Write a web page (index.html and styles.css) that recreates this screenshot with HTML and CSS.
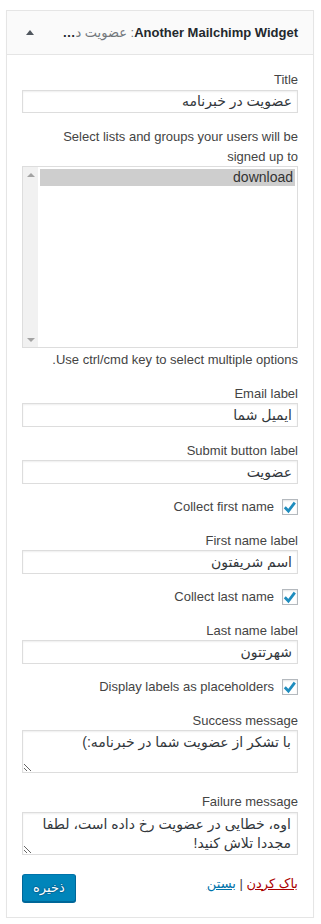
FILE: index.html
```html
<!DOCTYPE html>
<html dir="rtl" lang="fa">
<head>
<meta charset="UTF-8">
<meta name="viewport" content="width=device-width, initial-scale=1.0">
<title>Another Mailchimp Widget</title>
<link rel="stylesheet" href="styles.css">
</head>
<body>
  <div class="widget">
    <div class="widget-top">
      <h3 class="widget-title">Another Mailchimp Widget<span class="in-widget-title">: عضویت در خبرنامه</span></h3>
      <button class="widget-toggle" aria-label="Toggle"><span class="toggle-arrow"></span></button>
    </div>

    <div class="widget-inside">
      <p class="field">
        <label>Title</label>
        <input class="text" type="text" value="عضویت در خبرنامه">
      </p>

      <p class="field">
        <label>Select lists and groups your users will be signed up to</label>
        <span class="listbox">
          <span class="list-options">
            <span class="option selected">download</span>
          </span>
          <span class="list-scroll">
            <span class="scroll-up"></span>
            <span class="scroll-down"></span>
          </span>
        </span>
        <span class="hint">Use ctrl/cmd key to select multiple options.</span>
      </p>

      <p class="field">
        <label>Email label</label>
        <input class="text" type="text" value="ایمیل شما">
      </p>

      <p class="field">
        <label>Submit button label</label>
        <input class="text" type="text" value="عضویت">
      </p>

      <p class="field check-row">
        <span class="checkbox"><svg width="16" height="16" viewBox="0 0 16 16"><polyline points="2.8,8.2 6.4,12 12.8,3.6" fill="none" stroke="#1e8cbe" stroke-width="2.8"/></svg></span>
        <span>Collect first name</span>
      </p>

      <p class="field">
        <label>First name label</label>
        <input class="text" type="text" value="اسم شریفتون">
      </p>

      <p class="field check-row">
        <span class="checkbox"><svg width="16" height="16" viewBox="0 0 16 16"><polyline points="2.8,8.2 6.4,12 12.8,3.6" fill="none" stroke="#1e8cbe" stroke-width="2.8"/></svg></span>
        <span>Collect last name</span>
      </p>

      <p class="field">
        <label>Last name label</label>
        <input class="text" type="text" value="شهرتتون">
      </p>

      <p class="field check-row">
        <span class="checkbox"><svg width="16" height="16" viewBox="0 0 16 16"><polyline points="2.8,8.2 6.4,12 12.8,3.6" fill="none" stroke="#1e8cbe" stroke-width="2.8"/></svg></span>
        <span>Display labels as placeholders</span>
      </p>

      <p class="field field-area">
        <label>Success message</label>
        <textarea class="area">با تشکر از عضویت شما در خبرنامه:)</textarea>
      </p>

      <p class="field field-area">
        <label>Failure message</label>
        <textarea class="area">اوه، خطایی در عضویت رخ داده است، لطفا مجددا تلاش کنید!</textarea>
      </p>

      <div class="widget-actions">
        <div class="action-links">
          <a href="#" class="link-delete">باک کردن</a> | <a href="#" class="link-close">بستن</a>
        </div>
        <button class="button-save">ذخیره</button>
      </div>
    </div>
  </div>
</body>
</html>
```

FILE: styles.css
```css
body {
  margin: 0;
  background: #fff;
  color: #444;
  font-family: 'Liberation Sans', 'DejaVu Sans', sans-serif;
  font-size: 13px;
  line-height: 19.5px;
}

.widget {
  margin: 10px 7px 0 6px;
  border: 1px solid #e5e5e5;
  box-shadow: 0 1px 1px rgba(0, 0, 0, 0.04);
  background: #fff;
}

.widget-top {
  display: flex;
  align-items: center;
  height: 43px;
  background: #fafafa;
  border-bottom: 1px solid #e5e5e5;
}

.widget-title {
  flex: 1;
  min-width: 0;
  margin: 0;
  padding: 0 15px 0 9px;
  font-size: 13px;
  font-weight: 700;
  line-height: 43px;
  color: #23282d;
  white-space: nowrap;
  overflow: hidden;
  text-overflow: ellipsis;
}

.in-widget-title {
  font-weight: 400;
  color: #72777c;
}

.widget-toggle {
  width: 46px;
  height: 43px;
  padding: 0;
  border: none;
  background: transparent;
  display: flex;
  align-items: center;
  justify-content: center;
}

.toggle-arrow {
  width: 0;
  height: 0;
  border-left: 4px solid transparent;
  border-right: 4px solid transparent;
  border-bottom: 5px solid #50575e;
}

.widget-inside {
  padding: 15px 15px 15px;
}

.field {
  margin: 0 0 14px;
}

.field label {
  display: block;
}

.text {
  display: block;
  width: 100%;
  height: 23.5px;
  box-sizing: border-box;
  margin: 0;
  padding: 0 5px;
  border: 1px solid #ddd;
  box-shadow: inset 0 1px 2px rgba(0, 0, 0, 0.07);
  background: #fff;
  color: #32373c;
  font-family: 'Liberation Sans', 'DejaVu Sans', sans-serif;
  font-size: 14px;
  outline: none;
}

.listbox {
  display: flex;
  height: 182px;
  box-sizing: border-box;
  border: 1px solid #ddd;
  background: #fff;
}

.list-options {
  flex: 1;
  padding: 2px;
}

.option {
  display: block;
  height: 17px;
  padding-right: 2px;
  line-height: 17px;
  font-size: 14px;
  color: #333;
}

.option.selected {
  background: #cecece;
}

.list-scroll {
  width: 15px;
  background: #f1f1f1;
  display: flex;
  flex-direction: column;
  justify-content: space-between;
  align-items: center;
  padding: 6px 0 5px;
  box-sizing: border-box;
}

.scroll-up {
  width: 0;
  height: 0;
  border-left: 4px solid transparent;
  border-right: 4px solid transparent;
  border-bottom: 4px solid #a3a3a3;
}

.scroll-down {
  width: 0;
  height: 0;
  border-left: 4px solid transparent;
  border-right: 4px solid transparent;
  border-top: 4px solid #a3a3a3;
}

.hint {
  display: block;
  margin-top: 2px;
}

.check-row {
  display: flex;
  align-items: center;
  gap: 8px;
  height: 19px;
}

.checkbox {
  width: 16px;
  height: 16px;
  box-sizing: border-box;
  border: 1px solid #b4b9be;
  background: #fff;
  box-shadow: inset 0 1px 2px rgba(0, 0, 0, 0.1);
  display: flex;
}

.checkbox svg {
  margin: -1px;
}

.field-area {
  margin-bottom: 19px;
}

.area {
  display: block;
  width: 100%;
  height: 43px;
  box-sizing: border-box;
  margin: 0;
  padding: 2px 6px;
  border: 1px solid #ddd;
  box-shadow: inset 0 1px 2px rgba(0, 0, 0, 0.07);
  color: #32373c;
  font-family: 'Liberation Sans', 'DejaVu Sans', sans-serif;
  font-size: 14px;
  line-height: 19.6px;
  resize: vertical;
  overflow: hidden;
  outline: none;
}

.widget-actions {
  display: flex;
  justify-content: space-between;
  align-items: flex-start;
}

.action-links {
  color: #444;
}

.link-delete {
  color: #a00;
}

.link-close {
  color: #0073aa;
}

.button-save {
  height: 28px;
  padding: 0 10px;
  border: 1px solid #0073aa;
  border-color: #0073aa #006799 #006799;
  border-radius: 3px;
  background: #0085ba;
  box-shadow: 0 1px 0 #006799;
  color: #fff;
  text-shadow: 0 -1px 1px #006799, 1px 0 1px #006799, 0 1px 1px #006799, -1px 0 1px #006799;
  font-family: 'Liberation Sans', 'DejaVu Sans', sans-serif;
  font-size: 13px;
  line-height: 26px;
}
```
